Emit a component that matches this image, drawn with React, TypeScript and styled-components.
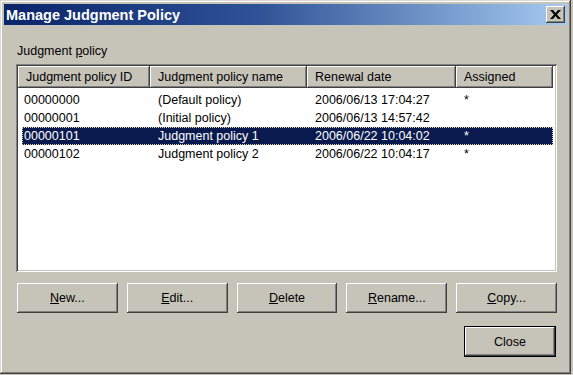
import React from 'react';
import styled, { createGlobalStyle } from 'styled-components';

const face = '#c6c3b9';

const columns = [
  { title: 'Judgment policy ID', width: 132 },
  { title: 'Judgment policy name', width: 157 },
  { title: 'Renewal date', width: 149 },
  { title: 'Assigned', width: 97 },
];

const policies = [
  { id: '00000000', name: '(Default policy)', date: '2006/06/13 17:04:27', assigned: '*' },
  { id: '00000001', name: '(Initial policy)', date: '2006/06/13 14:57:42', assigned: '' },
  { id: '00000101', name: 'Judgment policy 1', date: '2006/06/22 10:04:02', assigned: '*' },
  { id: '00000102', name: 'Judgment policy 2', date: '2006/06/22 10:04:17', assigned: '*' },
];

const GlobalStyle = createGlobalStyle`
  body {
    margin: 0;
    background: ${face};
    font-family: "Liberation Sans", Arial, sans-serif;
    font-size: 12.5px;
    color: #000;
  }
`;

const Window = styled.div`
  box-sizing: border-box;
  width: 571px;
  height: 374px;
  padding: 4px 4px 3px 4px;
  display: flex;
  flex-direction: column;
  background: ${face};
  box-shadow: inset -1px -1px #404040, inset 1px 1px #dcd9d0,
    inset -2px -2px #808080, inset 2px 2px #ffffff;
`;

const TitleBar = styled.div`
  height: 21px;
  display: flex;
  align-items: center;
  justify-content: space-between;
  padding: 0 2px 0 2px;
  background: linear-gradient(to right, #0a246a, #2f5296 45%, #a6caf0);
  color: #fff;
  font-weight: bold;
  font-size: 14.5px;
  white-space: nowrap;
`;

const CaptionButton = styled.button`
  box-sizing: border-box;
  width: 19px;
  height: 17px;
  padding: 0;
  border: none;
  background: ${face};
  display: flex;
  align-items: center;
  justify-content: center;
  box-shadow: inset -1px -1px #404040, inset 1px 1px #ffffff,
    inset -2px -2px #808080, inset 2px 2px ${face};
`;

const Content = styled.div`
  flex: 1;
  display: flex;
  flex-direction: column;
  padding: 19px 10px 0 12px;
`;

const GroupLabel = styled.div`
  line-height: 15px;
  padding-left: 1px;
  margin-bottom: 5px;
`;

const ListView = styled.div`
  box-sizing: border-box;
  height: 208px;
  padding: 2px;
  background: #fff;
  box-shadow: inset 1px 1px #808080, inset -1px -1px #ffffff,
    inset 2px 2px #404040, inset -2px -2px ${face};
  display: flex;
  flex-direction: column;
`;

const HeaderRow = styled.div`
  display: flex;
  height: 22px;
`;

const HeaderCell = styled.div<{ $w: number }>`
  box-sizing: border-box;
  width: ${(p) => p.$w}px;
  flex: none;
  padding-left: 8px;
  display: flex;
  align-items: center;
  background: ${face};
  white-space: nowrap;
  box-shadow: inset -1px -1px #404040, inset 1px 1px #ffffff,
    inset -2px -2px #808080;
`;

const Rows = styled.div`
  padding-top: 3px;
  display: flex;
  flex-direction: column;
`;

const Row = styled.div<{ $selected?: boolean }>`
  display: flex;
  height: 18px;
  align-items: center;
  margin-left: 4px;
  width: 531px;
  box-sizing: border-box;
  background: ${(p) => (p.$selected ? '#0a1a4e' : 'transparent')};
  color: ${(p) => (p.$selected ? '#fff' : '#000')};
  outline: ${(p) => (p.$selected ? '1px dotted #d8d4a8' : 'none')};
  outline-offset: -1px;
`;

const Cell = styled.div<{ $w: number; $first?: boolean }>`
  box-sizing: border-box;
  width: ${(p) => p.$w}px;
  flex: none;
  padding-left: ${(p) => (p.$first ? 2 : 8)}px;
  white-space: nowrap;
`;

const ButtonRow = styled.div`
  display: grid;
  grid-template-columns: repeat(5, 1fr);
  column-gap: 9px;
  margin: 11px 0 0 1px;
`;

const Button = styled.button<{ $default?: boolean }>`
  box-sizing: border-box;
  height: ${(p) => (p.$default ? 31 : 30)}px;
  width: ${(p) => (p.$default ? '92px' : 'auto')};
  padding: 0;
  border: ${(p) => (p.$default ? '1px solid #000' : 'none')};
  background: ${face};
  font-family: inherit;
  font-size: 12.5px;
  color: #000;
  box-shadow: inset -1px -1px #404040, inset 1px 1px #ffffff,
    inset -2px -2px #808080, inset 2px 2px ${face};
`;

const Footer = styled.div`
  display: flex;
  justify-content: flex-end;
  margin: 13px 1px 0 0;
`;

const CloseGlyph = () => (
  <svg width="11" height="9" viewBox="0 0 11 9">
    <path
      d="M0 0h3l2.5 3L8 0h3L7 4.5 11 9H8L5.5 6 3 9H0l4-4.5z"
      fill="#000"
    />
  </svg>
);

const App = () => {
  return (
    <>
      <GlobalStyle />
      <Window>
        <TitleBar>
          <span>Manage Judgment Policy</span>
          <CaptionButton aria-label="Close">
            <CloseGlyph />
          </CaptionButton>
        </TitleBar>
        <Content>
          <GroupLabel>
            Judgment <u>p</u>olicy
          </GroupLabel>
          <ListView>
            <HeaderRow>
              {columns.map((c) => (
                <HeaderCell key={c.title} $w={c.width}>
                  {c.title}
                </HeaderCell>
              ))}
            </HeaderRow>
            <Rows>
              {policies.map((p) => (
                <Row key={p.id} $selected={p.id === '00000101'}>
                  <Cell $w={columns[0].width - 4} $first>
                    {p.id}
                  </Cell>
                  <Cell $w={columns[1].width}>{p.name}</Cell>
                  <Cell $w={columns[2].width}>{p.date}</Cell>
                  <Cell $w={columns[3].width}>{p.assigned}</Cell>
                </Row>
              ))}
            </Rows>
          </ListView>
          <ButtonRow>
            <Button>
              <u>N</u>ew...
            </Button>
            <Button>
              <u>E</u>dit...
            </Button>
            <Button>
              <u>D</u>elete
            </Button>
            <Button>
              <u>R</u>ename...
            </Button>
            <Button>
              <u>C</u>opy...
            </Button>
          </ButtonRow>
          <Footer>
            <Button $default>Close</Button>
          </Footer>
        </Content>
      </Window>
    </>
  );
};

export default App;
